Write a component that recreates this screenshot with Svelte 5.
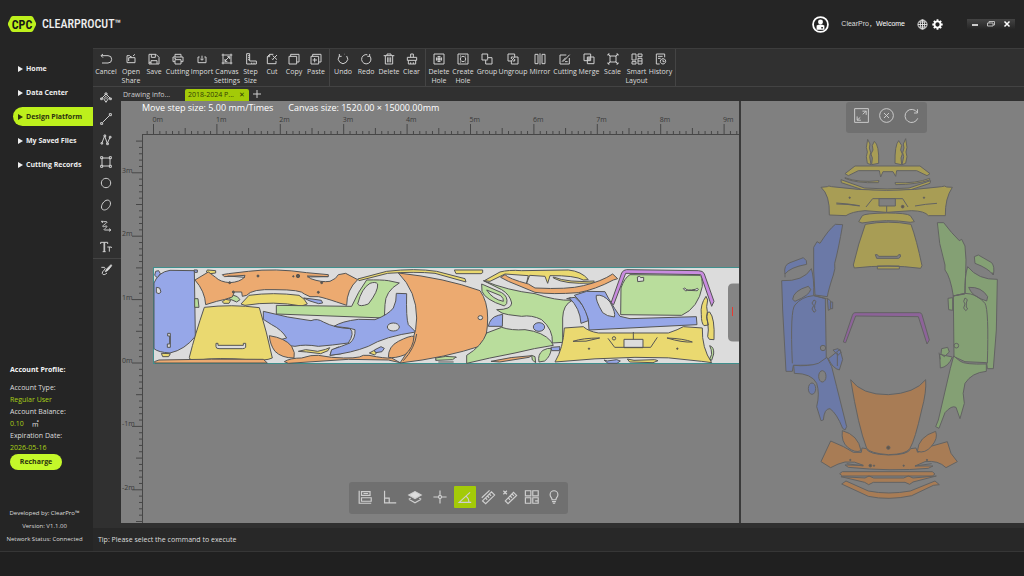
<script>
  const nav = ['Home', 'Data Center', 'Design Platform', 'My Saved Files', 'Cutting Records'];
  let page = $state('Design Platform');

  const groups = [
    { id: 'edit', items: [
      ['Cancel', 'M9 3L3 8l6 6M4 8h20a10 10 0 0 1 0 22H6'],
      ['Open Share', 'M6 29V8h8l4 4h3M6 29h24V14H11v10M24 9l6-5'],
      ['Save', 'M3 4h21l9 9v20H3zM10 4v9h12V4M9 33V23h18v10M3 28h6'],
      ['Cutting', 'M9 12V4h18v8M9 26H3V12h30v14h-6M9 20h18v13H9zM7 16h5'],
      ['Import', 'M11 12H6v17h24V12h-5M18 8v13M13 17l5 5 5-5'],
      ['Canvas Settings', 'M2 6h32M2 30h32M6 2v32M30 2v32M11 25L25 11M12 18v7h7M19 11h7v7'],
      ['Step Size', 'M5 2h9v22h20v9H5zM14 8H9M14 14H9M14 20H9M20 33v-4M27 33v-4'],
      ['Cut', 'M22 4H11L4 11v21h26v-8M4 11h7V4M33 6L20 19M20 8l13 12M18 17l4 4'],
      ['Copy', 'M3 10h23v23H3zM8 10V4h25v23h-7'],
      ['Paste', 'M3 10h23v23H3zM8 10V4h25v23h-7M14 15v13M8 21h13']
    ] },
    { id: 'history', items: [
      ['Undo', 'M7 9A14 14 0 1 0 29 9M24 5l-1-1M7 3v7h7'],
      ['Redo', 'M29 9A14 14 0 1 1 22 5M29 3v7h-7'],
      ['Delete', 'M2 8h32M12 8V3h12v5M7 8v25h22V8M14 13v15M18 13v15M23 13v15'],
      ['Clear', 'M14 13V3h8v10M4 13h28v9H4zM7 22v11h22V22M14 33v-5M22 33v-5']
    ] },
    { id: 'shape', items: [
      ['Delete Hole', 'M3 3h30v30H3zM18 10a8 8 0 1 0 .1 0M15 15h6v6h-6zM13 18h10M18 13v10'],
      ['Create Hole', 'M3 3h30v30H3zM18 10a8 8 0 1 0 .1 0M9 9h3M25 9h2M9 27h3M25 27h2'],
      ['Group', 'M3 3h17v11h13v19H14V21H3zM20 14v6M14 21h6'],
      ['Ungroup', 'M3 3h20v9h10v21H13v-9H3zM13 24l10-12M13 18v-6h7M23 18v6h-6'],
      ['Mirror', 'M18 1v34M3 4v28h9V4zM24 4v28h9V4z'],
      ['Cutting', 'M22 6H3v27h28V15M12 26L32 5M9 26L20 14M18 26h8'],
      ['Merge', 'M3 3h20v20H3zM13 12h20v20H13zM13 18h10M18 12v11'],
      ['Scale', 'M9 9h18v18H9zM3 3l7 7M33 3l-7 7M3 33l7-7M33 33l-7-7M3 8V3h5M28 3h5v5M3 28v5h5M28 33h5v-5'],
      ['Smart Layout', 'M3 3h12v18H3zM21 3h12v8H21zM3 26h12v7H3zM21 16h12v17H21zM21 24h12'],
      ['History', 'M14 33H4V3h25v10M9 10h14M9 16h8M24 17a8 8 0 1 0 .1 0M24 20v6h5']
    ] }
  ];

  const tools = [
    ['Edit nodes', 'M4 20L18 6l14 14M18 13l7 7-7 11-7-11zM18 18v4M15 3h6v5h-6zM2 18h5v5H2zM29 18h5v5h-5z'],
    ['Line', 'M8 28L28 8M2 29h6v5H2zM28 2h6v6h-6z'],
    ['Polyline', 'M6 26L14 6l8 22 8-18M3 26h5v4H3zM12 3h5v5h-5zM20 27h5v5h-5zM28 7h5v5h-5z'],
    ['Rectangle', 'M6 6h24v24H6zM2 2h6v6H2zM28 2h6v6h-6zM2 28h6v6H2zM28 28h6v6h-6z'],
    ['Circle', 'M18 4a14 14 0 1 0 .1 0'],
    ['Ellipse', 'M28 5C36 13 29 26 20 31S2 31 5 20 20-1 28 5'],
    ['Curve', 'M3 4h7M7 4v5M10 5h10c6 2-12 10-12 14s12-4 13 0-12 8-8 11h17M27 26l6 4-6 4'],
    ['Text', 'M2 9V4h21v5M12 4v28M8 32h9M14 4v28M22 18h12v3M28 18v14']
  ];

  const snaps = [
    ['Align', 'M3 2v32h31M9 4h22v10H9zM9 20h25v9H9zM14 9h12'],
    ['Right angle', 'M4 2v31h30M4 21h12v12'],
    ['Layers', 'M2 24l16 9 16-9M2 24l5-3M34 24l-5-3'],
    ['Crosshair', 'M18 1v13M18 22v13M1 18h13M22 18h13M18 14a4 4 0 1 0 .1 0'],
    ['Angle', 'M34 32H3L31 6M21 17q7 4 7 15'],
    ['Measure', 'M2 20L22 1M4 28L27 5l8 8-23 22zM12 21l4 4M17 16l4 4M22 11l4 4'],
    ['Clear measure', 'M6 28L27 6l8 8-22 21zM14 21l4 4M19 16l4 4M24 11l4 4M1 2l9 9M10 2l-9 9'],
    ['Arrange', 'M1 2h14v13H1zM20 2h14v13H20zM1 20h14v14H1zM20 20h14v14H20zM26 28h8'],
    ['Hint', 'M13 25c0-6-5-6-5-13a10 10 0 0 1 20 0c0 7-5 7-5 13zM13 30h10M15 34h6']
  ];
  let snap = $state('Angle');

  const METER = 63.4;
  const kind = (i) => (i % 10 === 0 ? 10 : i % 5 === 0 ? 6 : 3);
  const across = Array.from({ length: 96 }, (_, k) => k - 1).map((i) => ({ p: 153.5 + (i * METER) / 10, s: kind(i), i }));
  const down = Array.from({ length: 61 }, (_, k) => k - 25).map((i) => ({ p: 363 - (i * METER) / 10, s: kind(i), i }));
</script>

{#snippet icon(d)}
  <svg class="icon" viewBox="0 0 36 36" aria-hidden="true"><path {d} /></svg>
{/snippet}

<div class="app">
  <header>
    <div class="brand">
      <svg viewBox="0 0 28 16" aria-hidden="true">
        <path d="M5 0h18q1 0 2 1l3 6v2l-3 6q-1 1-2 1H5q-1 0-2-1L0 9V7l3-6q1-1 2-1z" fill="#bdf01c" />
        <text x="14" y="12.5" text-anchor="middle">CPC</text>
      </svg>
      <strong>CLEARPROCUT<span>™</span></strong>
    </div>
    <div class="user">
      <svg class="avatar" viewBox="0 0 48 48" aria-hidden="true">
        <circle cx="24" cy="24" r="21" fill="#222" stroke="#fff" stroke-width="5" />
        <circle cx="24" cy="17" r="7" fill="#fff" />
        <path d="M13 27q11-6 22 0v12H13z" fill="#fff" /><path d="M26 31h5v4h-5z" fill="#333" />
      </svg>
      <span class="hello">ClearPro，<b>Welcome</b></span>
      <button class="bare" aria-label="Language">
        <svg viewBox="0 0 36 36" fill="none" stroke="#e6e6e6" stroke-width="3"><circle cx="18" cy="18" r="15" /><ellipse cx="18" cy="18" rx="7" ry="15" /><path d="M18 3v30M3 18h30M6 10h24M6 26h24" /></svg>
      </button>
      <button class="bare" aria-label="Preferences">
        <svg viewBox="0 0 36 36"><circle cx="18" cy="18" r="10" fill="none" stroke="#fff" stroke-width="6" /><path d="M18 1v6M18 29v6M1 18h6M29 18h6M6 6l4 4M26 26l4 4M6 30l4-4M26 10l4-4" stroke="#fff" stroke-width="6" /></svg>
      </button>
      <div class="window">
        <button aria-label="Minimize"><svg viewBox="0 0 10 10"><path d="M2 6h6" stroke="#fff" stroke-width="1.5" /></svg></button>
        <button aria-label="Restore"><svg viewBox="0 0 10 10"><path d="M3 4V2.5h5.500V6H7M1.500 4H7v3H1.500z" fill="none" stroke="#bbb" /></svg></button>
        <button aria-label="Close"><svg viewBox="0 0 10 10"><path d="M2.500 2.500l5 5M7.500 2.500l-5 5" stroke="#fff" stroke-width="1.500" /></svg></button>
      </div>
    </div>
  </header>

  <div class="body">
    <aside>
      <nav>
        {#each nav as n}
          <a href="#{n.replaceAll(' ', '-')}" class:on={page === n} onclick={() => (page = n)}>
            <svg viewBox="0 0 5 6" aria-hidden="true"><path d="M0 0l5 3-5 3z" fill="currentColor" /></svg>{n}
          </a>
        {/each}
      </nav>
      <section class="account">
        <h2>Account Profile:</h2>
        <p>Account Type:</p>
        <p class="lime">Regular User</p>
        <p>Account Balance:</p>
        <p><span class="lime">0.10</span><span class="unit">㎡</span></p>
        <p>Expiration Date:</p>
        <p class="lime">2026-05-16</p>
        <button class="recharge">Recharge</button>
      </section>
      <section class="about">
        <p>Developed by: ClearPro™</p>
        <p>Version: V1.1.00</p>
        <p>Network Status: Connected</p>
      </section>
    </aside>

    <main>
      <div class="ribbon">
        {#each groups as g}
          <div class="group {g.id}">
            {#each g.items as [label, d]}
              <button>{@render icon(d)}<span>{label}</span></button>
            {/each}
          </div>
        {/each}
      </div>

      <div class="work">
        <div class="tools">
          <div class="draw">
            {#each tools as [label, d]}
              <button aria-label={label}>{@render icon(d)}</button>
            {/each}
          </div>
          <button class="pick" aria-label="Brush"><svg class="icon" viewBox="0 0 36 36" aria-hidden="true"><path d="M4 10h9q5 3 0 8-8 6-6 11 4 7 14-2" /><path d="M33 2L20 15l-4 8 8-4L35 5z" fill="#ddd" /></svg></button>
        </div>

        <div class="stage">
          <div class="tabs">
            <button class="tab">Drawing info...</button>
            <div class="tab on"><span>2018-2024 P...</span><button aria-label="Close tab">✕</button></div>
            <button class="plus" aria-label="New tab"><svg viewBox="0 0 8 8"><path d="M4 0v8M0 4h8" stroke="#ccc" /></svg></button>
          </div>

          <div class="split">
            <div class="canvas">
              <svg viewBox="121 101 618 422" preserveAspectRatio="xMinYMin slice" role="img" aria-label="Nesting canvas">
                <g stroke="#464646" stroke-width="1">
                  <path d="M142 134.500H1400M142.500 134V700" />
                  {#each across as t}<path d="M{t.p} 134v-{t.s}" />{/each}
                  {#each down as t}<path d="M142 {t.p}h-{t.s}" />{/each}
                </g>
                <g class="rule">
                  {#each across as t}{#if t.i % 10 === 0}<text x={t.p - 1} y="122">{t.i / 10}m</text>{/if}{/each}
                  {#each down as t}{#if t.i % 10 === 0}<text x="122" y={t.p}>{t.i / 10}m</text>{/if}{/each}
                </g>
                <rect x="153.500" y="267.500" width="1200" height="96" fill="#dcdcdc" stroke="#3f8f8c" />

                <g class="parts" transform="translate(145 258) scale(.33333)">
                  <path class="b" d="M27 75Q40 42 75 37L148 38L151 235Q120 275 75 285Q40 283 27 272Z" />
                  <path class="b" d="M29 52l3-12 9-2 5 9-9 12zM147 36h10v7h-8zM476 120l25 3 28 4 4 8-12 2-26-8z" />
                  <path class="w" d="M34 88l10 2 4 12-6 5-8-3zM68 226h8v42h-9v-10h7v-24h-6z" />
                  <path class="g" d="M149 122h10l3 26h-13zM252 122l11-11 14 5 8 9-10 7z" />
                  <path class="y" d="M49 286l27 1-5 9H53zM187 36l25 2v7l-16 2-12-5zM232 131l10-7 15 3-5 9h-16z" />
                  <path class="o" d="M150 66L190 42L212 58Q225 72 255 74Q285 72 298 58L300 52L238 56L232 50L250 47L310 40Q390 30 485 44L550 50V56L487 54L497 62Q530 74 555 70Q575 62 580 50L602 46L638 65Q605 95 605 142L575 132Q540 120 520 116H495L478 108Q470 95 390 95Q320 92 305 112L292 115L290 102H268L262 117Q240 125 215 130L182 140Q180 100 150 66Z" />
                  <path class="y" d="M288 138L312 112Q385 102 462 112Q480 122 487 138L470 144Q385 128 300 142Z" />
                  <path class="y" d="M178 148Q260 138 343 149Q365 220 382 300Q360 310 310 305Q220 298 160 306Q133 310 133 298Q150 230 178 148Z" />
                  <path class="w" d="M213 256h6v6h76v-6h7v12q-3 4-10 4h-70q-9 0-9-6z" />
                  <path class="b" d="M355 160Q430 180 498 188Q517 180 535 192Q570 210 615 212Q630 225 610 255Q560 262 520 265Q480 258 450 265Q410 262 396 248L425 240Q410 215 380 200L355 184Z" />
                  <path class="o" d="M373 233Q420 240 440 265Q452 285 447 300Q410 300 390 280Q375 260 373 233Z" />
                  <path class="o" d="M28 311l14-5Q200 302 355 304l12 11H30z" />
                  <path class="o" d="M418 311Q435 300 470 300Q500 290 520 292L560 298Q640 304 655 292L672 292Q720 302 740 300L765 314L730 306L610 304L430 316Z" />
                  <path class="y" d="M460 280l22-5 16 2 20 3 24-6 12-5-5 9-22 9-42-5zM673 285l13-7 10 5-7 8z" />
                  <path class="b" d="M555 292l5-15 20-10 12 8-3 12zM688 276l20-10 10 5-7 10-19 3z" />
                  <circle class="dot" cx="339" cy="54" r="3" /><circle class="dot" cx="459" cy="54" r="5" /><circle class="dot" cx="445" cy="55" r="2" />
                  <circle class="dot" cx="254" cy="74" r="3" /><circle class="dot" cx="530" cy="74" r="3" /><circle class="dot" cx="265" cy="102" r="3" /><circle class="dot" cx="520" cy="103" r="3" />
                  <path class="line" d="M300 58l-52-4M487 57l62-1" />
                </g>

                <g class="parts" transform="translate(335 258) scale(.33333)">
                  <path class="g" d="M-176 142L50 145Q70 100 95 66Q140 65 160 68L193 75Q150 100 150 140L148 180L-176 168Z" />
                  <path class="w" d="M128 78Q130 100 100 138Q74 148 68 138Q80 90 105 76Q122 70 128 78Z" />
                  <path class="b" d="M-3 205Q20 190 70 184L120 185Q160 170 175 150Q185 130 184 106L215 107Q213 180 220 200L242 222Q150 235 100 265Q50 285-15 292L-10 275Q20 265 45 255Q62 240 60 215L40 210Z" />
                  <ellipse class="w" cx="175" cy="207" rx="18" ry="12" />
                  <path class="y" d="M68 63L155 40Q240 30 305 40L390 62L393 72L300 46Q240 40 158 46L72 68ZM358 36H443V44L438 47H363Z" />
                  <path class="o" d="M190 45Q330 60 435 98Q458 130 458 180Q458 230 443 262Q330 300 195 315Q245 250 245 180Q245 100 190 45Z" />
                  <ellipse class="w" cx="436" cy="179" rx="7" ry="6" />
                  <path class="o" d="M160 298Q160 265 190 250Q225 232 237 235Q235 270 210 290Q180 302 160 298Z" />
                  <path class="line" d="M245 228Q240 270 205 308M300 306l65-8M310 312h46" />
                  <path class="g" d="M302 300q30-8 61-3l-10 8-50 2z" />
                  <path class="g" d="M445 68Q520 98 600 107Q660 128 712 127Q684 140 683 180V253L652 255Q655 215 620 185Q590 170 560 175L520 170Q500 168 485 155Q530 155 530 135Q525 110 500 95Z" />
                  <path class="g" d="M440 78L500 104Q520 115 515 137L508 144Q450 125 441 100Z" /><path class="w" d="M455 96l42 17q10 8 8 17-32-6-50-34z" />
                  <path class="g" d="M395 292Q440 265 455 225L500 208Q530 218 570 215Q625 222 648 250L655 262Q600 270 540 285Q460 300 395 316Z" />
                  <path class="b" d="M460 205Q465 178 490 172L503 169L502 205Z" /><ellipse class="b" cx="612" cy="207" rx="17" ry="13" />
                  <path class="y" d="M448 68L495 42Q520 35 560 38L700 36Q740 40 760 65L745 66Q720 52 645 53L638 76L630 55L584 52L574 78L580 53L510 48L465 70Z" />
                  <path class="y" d="M655 57Q700 75 778 69L773 75Q690 80 655 60Z" />
                  <path class="o" d="M497 58L510 50Q520 62 580 78L600 90Q700 95 745 83Q800 70 833 48L848 62L835 66Q780 95 730 104Q650 110 600 103L520 70Z" />
                  <path class="o" d="M468 310q60-14 122-17l-8 5-88 14z" /><path class="g" d="M590 292l10 4 2 18-10-8zM612 312q-5-22 12-35 15-8 25-6-2 24-20 38z" />
                </g>

                <g class="parts" transform="translate(535 258) scale(.33333)">
                  <path class="b" d="M48 268l27-2-2 12H50zM95 122l12-3 6 6zM207 306l10 3 28-4 11 4-10 7h-27z" />
                  <path class="b" d="M103 120L120 118Q158 150 160 188L138 196Q135 150 103 120Z" />
                  <path class="b" d="M118 112L155 100L210 101L220 120Q240 155 255 175L285 182L484 176L486 200L162 216L160 184Q145 135 118 112Z" />
                  <path class="w" d="M184 112Q180 125 203 164Q215 175 238 177Q243 165 225 132Q205 108 184 112Z" />
                  <path class="p" d="M228 135L260 45Q265 35 275 35L490 38Q505 38 508 48L537 130L530 145L497 50L272 46L236 140Z" />
                  <path class="g" d="M258 90Q268 60 285 50L495 52Q502 55 502 85Q490 150 440 172L257 170Z" />
                  <path class="w" d="M307 57l7-2 3 4 9-1v11l-18 2zM445 92q4-4 8 1 2 6 28 1 8-6 9 1-3 5-9 3l-24-1-5 2z" />
                  <path class="y" d="M88 210L145 206Q160 220 190 225H400Q430 215 445 206L502 210Q500 270 530 314L500 310Q400 295 300 298Q180 300 60 312Q85 270 88 210Z" />
                  <path class="w" d="M267 244h57v25h-57z" />
                  <path class="line" d="M219 241l20 27h108l20-30M295 222v22M114 250q38 4 80-10M114 250q30-10 80-10M472 252q-30 2-76-12M472 252q-25-10-76-12" />
                  <circle class="dot" cx="162" cy="272" r="2" /><circle class="dot" cx="427" cy="272" r="2" /><circle class="line" cx="237" cy="241" r="5" />
                  <path class="y" d="M513 115q-18 25-14 55 0 26 8 33l13-2-5-20 2-20-2-15 3-20zM518 163l-3 12 3 16 2 25-2 20 5 8 14 1Q540 180 524 162zM277 303l20 4 62-2 10 3-15 6-70-2z" />
                  <path class="g" d="M524 263q14 4 12 25l-6 19-6-4 6-14q0-15-6-26z" />
                </g>
                <path d="M739 283.500h-6q-5 0-5 5v48q0 5 5 5h6z" fill="#858585" /><path d="M732.500 307v9" stroke="#e43b32" />
              </svg>
              <p class="info"><span>Move step size: 5.00 mm/Times</span><span>Canvas size: 1520.00 × 15000.00mm</span></p>
              <div class="snaps">
                {#each snaps as [label, d]}
                  <button aria-label={label} class:on={snap === label} onclick={() => (snap = label)}>
                    {#if label === 'Layers'}
                      <svg class="icon" viewBox="0 0 36 36"><path d="M2 13l16-9 16 9-16 9z" fill="#ddd" /><path {d} /></svg>
                    {:else}{@render icon(d)}{/if}
                  </button>
                {/each}
              </div>
            </div>

            <div class="preview">
              <svg viewBox="741 101 283 422" preserveAspectRatio="xMidYMin meet" role="img" aria-label="Vehicle pattern preview">
                <g class="parts dim" transform="translate(765 130) scale(.33333)">
                  <path class="y" d="M308 28l7 14-2 12 4 14-3 12 4 24-11-4-3-20 3-14-3-14zM328 34Q343 45 341 100L320 104l2-20-4-12 6-12-2-14zM422 26l-7 16 2 12-4 14 3 12-5 24 11-4 4-20-3-14 3-14zM401 32Q389 45 390 100l20 4-2-20 4-12-5-12 3-14z" />
                  <path class="y" d="M240 131L270 108H465L495 131L486 137L455 122H395L392 139L384 125H354L347 141L343 122H280L250 137Z" />
                  <path class="y" d="M240 143q40 16 102 9l-2 6q-70 2-100-13zM494 145q-40 16-104 13l2 6q60 0 102-14zM228 149l70 25q70 6 134 0l65-22-2 8-60 20q-70 6-140 0l-66-22z" />
                  <path class="y" d="M168 172L187 170Q190 166 200 170Q280 181 365 181Q450 181 530 170Q540 166 545 171L562 172Q540 205 541 257L490 257Q480 243 440 242L365 247L300 242Q260 245 243 257L193 255Q195 195 168 172Z" />
                  <path class="line" d="M303 231l20-25h90l16 25M365 228v18M214 222q35 0 70 6M214 219q35 2 70 8M516 220q-35 2-66 8" /><path d="M342 206h49v22h-49z" fill="#808080" /><circle class="dot" cx="413" cy="230" r="4" /><circle class="dot" cx="254" cy="203" r="2" /><circle class="dot" cx="477" cy="203" r="2" />
                  <path class="y" d="M281 275L292 257Q300 250 365 249Q425 249 436 257L448 275L436 277Q365 266 291 279ZM301 283Q370 270 438 283Q455 330 471 407L467 415Q370 402 268 414L265 405Q280 340 301 283ZM337 408h66v9h-66z" />
                  <path class="w" d="M331 374h6l4 5h56l4-5h5v7l-5 4h-66z" />
                  <path class="b" d="M211 283L233 284Q220 360 209 400Q212 415 205 435Q190 480 187 500L150 495L146 420V352L156 335L165 340Q190 300 211 283ZM60 432Q55 405 75 398L115 383L124 392L125 403Q75 412 60 432ZM50 452Q115 455 139 416Q148 445 146 496L181 506L184 695Q175 700 165 705L85 706L82 724H63L53 540Z" />
                  <path class="g" d="M517 278L536 278Q560 310 583 332L590 328L600 348Q605 390 602 430L600 492L565 498Q556 440 540 420V405Q520 340 517 278ZM628 380L640 375L680 398Q690 410 685 435Q670 415 630 400ZM608 410Q640 450 697 448L694 600L685 716H667L665 698L600 695L567 680L565 498L600 490Q598 440 608 410Z" />
                  <path class="w" d="M83 508Q85 482 130 469L137 478Q135 495 90 514ZM611 472Q650 470 668 500L665 513Q620 500 611 472Z" />
                  <path class="line" d="M82 700Q75 540 90 525Q110 500 145 497L185 506M667 700Q672 540 660 520Q635 490 600 490L563 498M60 430v12M685 435l-4-8" />
                  <path class="b" d="M147 510l6 4-4 12v10l4 6-6 5-6-10 5-10-5-8zM187 505l10 8v24l-7 4zM196 516h7v20h-7z" /><path class="g" d="M600 504l7 5-3 10v12l4 6-6 5-6-8 4-12-4-8zM549 505l14-2v38l-12-2z" />
                  <path class="p" d="M235 636L262 556Q264 548 270 548H464Q470 549 471 554L493 630L486 642L460 560L272 558L242 638Z" />
                </g>
                <g class="parts dim" transform="translate(765 310) scale(.33333)">
                  <path class="b" d="M86 166Q130 170 160 160L186 142L200 170L215 230L245 350L240 360L233 355Q215 310 195 296Q178 295 175 330L168 332L155 290Q165 250 155 220Q140 190 88 190Z" />
                  <path class="b" d="M190 146l35-28 8 30-10 32q-20-5-33-34zM204 120l15-4 10 10-10 10zM217 128v40" /><ellipse class="b" cx="141" cy="236" rx="11" ry="17" /><ellipse class="w" cx="172" cy="199" rx="11" ry="17" /><ellipse class="w" cx="174" cy="114" rx="8" ry="8" />
                  <path class="g" d="M664 162Q600 164 586 154L566 138L556 175L520 330L512 350L522 355L540 308Q560 285 573 292L585 326L598 280Q590 250 600 220Q620 188 664 184Z" />
                  <path class="g" d="M524 133l38 8q-12 30-36 33zM530 116l18-4 5 14-15 14-10-8zM522 128l4 20" /><circle class="line" cx="574" cy="107" r="7" />
                  <path class="o" d="M168 455L197 393Q240 410 265 427H289L291 414L304 416Q310 433 370 435Q430 435 437 416L453 414L458 427Q500 405 547 395L558 430L577 455L543 473Q520 450 480 455L450 468L504 468L490 475Q380 485 250 472L240 465L295 466Q270 452 240 456Q220 460 197 473Z" />
                  <path class="o" d="M257 209Q290 255 370 254Q450 250 482 209Q485 245 470 300Q450 390 435 415Q425 433 370 434Q315 430 305 415Q280 350 257 209Z" /><circle class="dot" cx="370" cy="413" r="5" />
                  <path class="o" d="M232 362Q280 375 288 422Q270 430 248 412Q228 395 232 362ZM512 364Q460 380 457 424Q480 432 500 408Q520 385 512 364Z" />
                  <path class="line" d="M245 461l50 7M500 461l-50 7" /><circle class="dot" cx="316" cy="467" r="4" /><circle class="dot" cx="327" cy="467" r="2" /><circle class="dot" cx="416" cy="467" r="2" /><circle class="dot" cx="256" cy="450" r="2" /><circle class="dot" cx="486" cy="450" r="2" />
                  <path class="o" d="M224 491l8-6h270l8 7-8 6H232zM228 500l72 4 12-6 14 6h90l14-6 14 6 70-6-70 18-10 7-14-6h-95l-14 7-12-7zM230 522L243 513L310 543Q370 555 436 543L510 513L523 524L505 526L440 557Q370 572 310 559L243 528Z" />
                </g>
              </svg>
              <div class="zoom">
                <button aria-label="Fit"><svg class="icon" viewBox="0 0 48 48"><path d="M2 2h44v44H2zM10 27v12h12M10 39l10-9M27 10h12v12M39 10L28 20" /></svg></button>
                <button aria-label="Clear"><svg class="icon" viewBox="0 0 48 48"><circle cx="24" cy="24" r="22" /><path d="M16 16l16 16M32 16L16 32" /></svg></button>
                <button aria-label="Reset"><svg class="icon" viewBox="0 0 48 48"><path d="M42 14A21 21 0 1 0 44 33M43 4v12H32" /></svg></button>
              </div>
            </div>
          </div>
        </div>
      </div>
      <p class="tip">Tip: Please select the command to execute</p>
    </main>
  </div>
  <footer></footer>
</div>

<style>
  :global(body) { margin: 0; background: #202020; }
  .app { min-height: 100vh; display: flex; flex-direction: column; background: #252525; color: #dedede; font: 7px/10px "Open Sans", "Noto Sans", "Noto Sans CJK SC", sans-serif; }
  p, h2 { margin: 0; }
  button { font: inherit; color: inherit; background: none; border: 0; padding: 0; display: grid; place-items: center; cursor: pointer; }
  .icon { width: 12px; height: 12px; fill: none; stroke: #cfcfcf; stroke-width: 3; display: block; overflow: visible; }

  header { height: 48px; display: flex; justify-content: space-between; align-items: center; padding: 0 9px 0 8px; box-sizing: border-box; }
  .brand { display: flex; align-items: center; gap: 6px; }
  .brand svg { width: 28px; height: 16px; }
  .brand text { font: bold 12px "Liberation Sans Narrow", "Roboto Condensed", "Liberation Sans", sans-serif; fill: #161616; }
  .brand strong { font: 500 12px/16px "Liberation Sans Narrow", "Roboto Condensed", Roboto, sans-serif; color: #eee; }
  .user { display: flex; align-items: center; }
  .avatar { width: 17px; height: 17px; margin-right: 12px; }
  .hello { font-family: "Liberation Sans", "Noto Sans CJK SC", sans-serif; margin-right: 12px; }
  .hello b { font-weight: 500; color: #fff; }
  .bare { margin-right: 4px; }
  .bare svg { width: 11px; height: 11px; display: block; }
  .window { display: flex; margin-left: 20px; background: linear-gradient(#444, #262626); }
  .window button { width: 16px; height: 10px; }
  .window svg { width: 10px; height: 10px; }

  .body { flex: 1; display: grid; grid-template-columns: 93px minmax(0, 1fr); }
  aside { display: flex; flex-direction: column; padding-top: 11px; }
  nav { display: grid; gap: 5px; padding-left: 13px; }
  nav a { display: flex; align-items: center; gap: 3px; height: 19px; padding-left: 5px; color: #eee; font-weight: 700; text-decoration: none; white-space: nowrap; border-radius: 10px 0 0 10px; }
  nav a.on { background: #bdf01c; color: #2c3210; }
  nav svg { width: 5px; height: 6px; }
  .account { margin-top: auto; padding-left: 10px; line-height: 12px; }
  .account h2 { font-size: 7px; line-height: 12px; color: #f4f4f4; margin-bottom: 6px; }
  .lime { color: #a9d117; }
  .unit { margin-left: 8px; }
  .recharge { width: 52px; height: 16px; border-radius: 8px; background: #c4f82a; color: #2b3210; font-weight: 700; }
  .about { margin: 37px 0 5px; font-size: 6px; line-height: 13px; text-align: center; white-space: nowrap; padding-right: 4px; }

  main { display: flex; flex-direction: column; background: #303030; }
  .ribbon { height: 39px; box-sizing: border-box; flex: none; display: flex; border-top: 1px solid #3d3d3d; border-bottom: 1px solid #434343; }
  .group { display: grid; padding-right: 2px; margin-right: 1px; border-right: 1px solid #444; }
  .group.edit { grid-template-columns: 26px 24px 22px 25px 24px 26px 21px 22px 22px 22px; }
  .group.history { grid-template-columns: 24px 22px 24px 21px; padding-right: 3px; }
  .group.shape { grid-template-columns: 24px 24px 24px 28px 26px 24px 24px 23px 25px 23px; padding-right: 3px; }
  .group button { display: flex; flex-direction: column; align-items: center; gap: 2px; padding-top: 4px; line-height: 9px; }
  .group span { width: min-content; text-align: center; }

  .work { flex: 1; display: grid; grid-template-columns: 28px minmax(0, 1fr); }
  .draw { height: 171px; display: grid; grid-auto-rows: 1fr; border-bottom: 1px solid #444; }
  .draw button { width: 26px; }
  .pick { width: 26px; height: 22px; }
  .stage { display: flex; flex-direction: column; }
  .tabs { display: flex; align-items: flex-end; height: 14px; flex: none; }
  .tab { width: 64px; height: 12px; padding-left: 2px; color: #ccc; justify-items: start; white-space: nowrap; box-sizing: border-box; }
  .tab.on { display: flex; align-items: center; justify-content: space-between; padding: 0 4px 0 3px; background: #a3ca08; color: #303b06; border-radius: 2px 2px 0 0; }
  .plus { width: 16px; height: 14px; }
  .plus svg { width: 8px; height: 8px; }
  .split { flex: 1; display: grid; grid-template-columns: minmax(0, 618fr) minmax(0, 285fr); background: #808080; }
  .canvas, .preview { position: relative; min-height: 422px; overflow: hidden; }
  .canvas > svg, .preview > svg { position: absolute; width: 100%; height: 100%; }
  .preview { border-left: 2px solid #3a3a3a; }
  .info { position: absolute; top: 1px; left: 21px; display: flex; gap: 15px; font-size: 9px; line-height: 12px; color: #fff; white-space: nowrap; }
  .rule text { font: 7px "Open Sans", sans-serif; fill: #383838; }
  .parts > * { vector-effect: non-scaling-stroke; stroke: #555; stroke-width: 1; }
  .parts .y { fill: #ead970; }
  .parts .o { fill: #ecaa70; }
  .parts .b { fill: #96a7e8; }
  .parts .g { fill: #b9dd9c; }
  .parts .p { fill: #c98ce0; }
  .parts .w { fill: #dcdcdc; }
  .parts .line { fill: none; }
  .parts .dot { fill: #665544; }
  .dim > * { stroke: #636363; }
  .dim .y { fill: #a89d55; }
  .dim .o { fill: #a87c55; }
  .dim .b { fill: #6b79a7; }
  .dim .g { fill: #84a074; }
  .dim .p { fill: #8d6399; }
  .dim .w { fill: #808080; }
  .snaps { position: absolute; left: 228px; bottom: 9px; height: 32px; box-sizing: border-box; padding: 4px 3px 0; display: grid; grid-template-columns: repeat(5, 25px) repeat(4, 22px); justify-items: center; align-items: start; background: #707070; border-radius: 3px; }
  .snaps button { width: 22px; height: 22px; border-radius: 1px; }
  .snaps .on { background: #a3ca08; }
  .snaps .icon { width: 14px; height: 14px; }
  .zoom { position: absolute; left: 50%; top: 1px; translate: -37px; display: grid; grid-template-columns: repeat(3, 25px); height: 31px; box-sizing: border-box; padding: 0 3px 4px; background: #707070; border-radius: 3px; }
  .zoom .icon { width: 15px; height: 15px; }
  .tip { height: 23px; margin-top: 5px; padding-left: 5px; line-height: 23px; background: #282828; }
  footer { height: 24px; background: #202020; border-top: 1px solid #363636; }
</style>
